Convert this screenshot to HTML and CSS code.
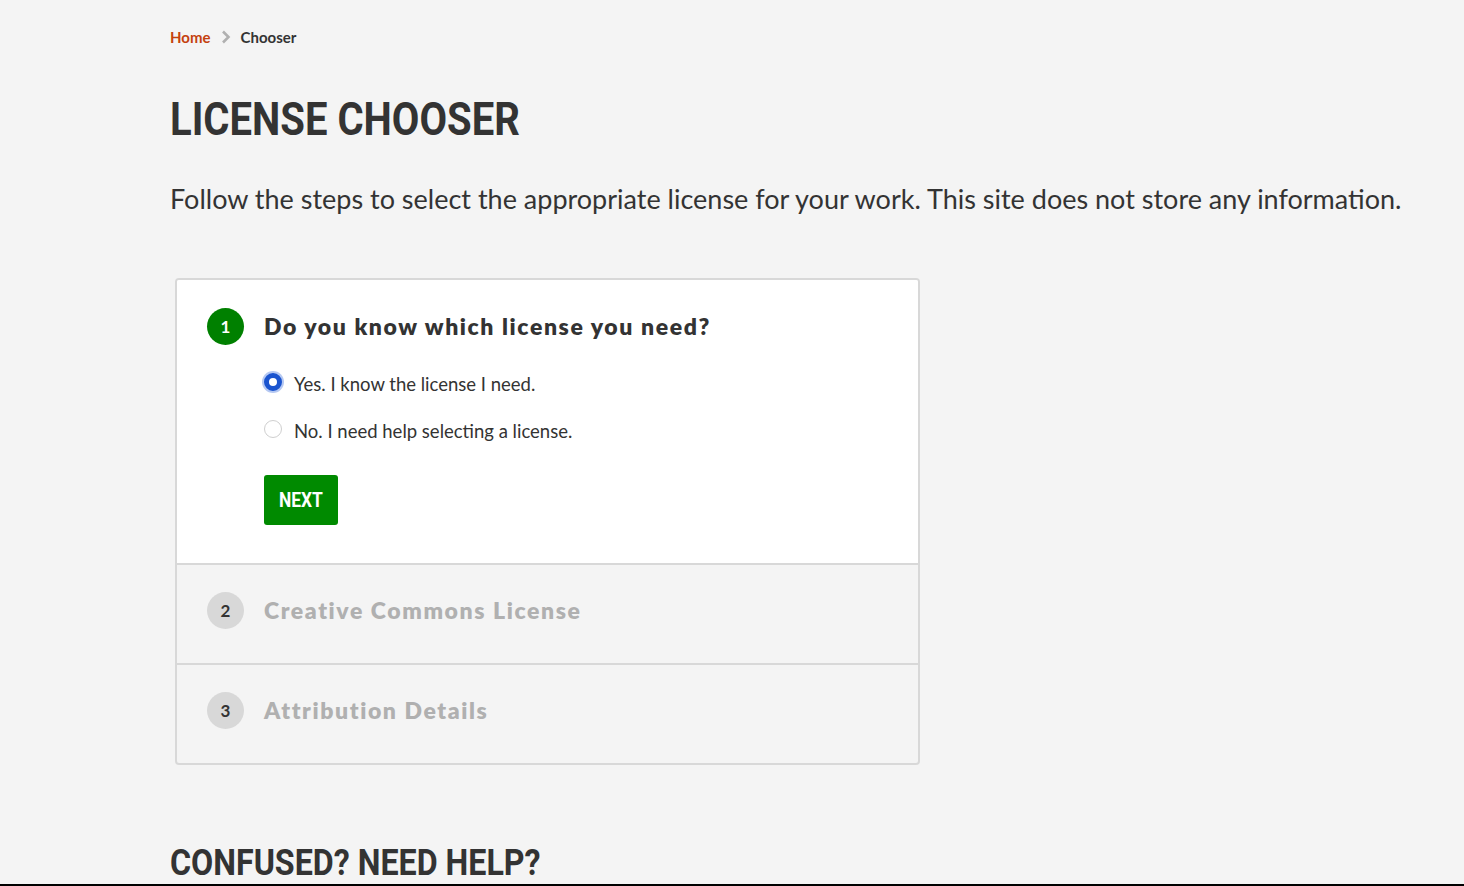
FILE: index.html
```html
<!DOCTYPE html>
<html lang="en">
<head>
<meta charset="utf-8">
<title>License Chooser</title>
<link rel="stylesheet" href="styles.css">
</head>
<body>
<main class="page">
  <nav class="crumbs">
    <a class="crumb-home" href="#">Home</a>
    <svg class="crumb-sep" width="10" height="14" viewBox="0 0 10 14"><path d="M2 1.5 L7.5 7 L2 12.5" fill="none" stroke="#b0b0b0" stroke-width="2.6"/></svg>
    <span class="crumb-current">Chooser</span>
  </nav>
  <h1 class="title"><span class="cond">LICENSE CHOOSER</span></h1>
  <p class="lead">Follow the steps to select the appropriate license for your work. This site does not store any information.</p>

  <section class="stepper">
    <div class="step step-active">
      <div class="step-head">
        <span class="step-num num-active">1</span>
        <h2 class="step-title">Do you know which license you need?</h2>
      </div>
      <div class="step-body">
        <label class="opt"><span class="radio radio-on"></span>Yes. I know the license I need.</label>
        <label class="opt"><span class="radio"></span>No. I need help selecting a license.</label>
        <button class="next"><span class="cond">NEXT</span></button>
      </div>
    </div>
    <div class="step">
      <div class="step-head">
        <span class="step-num">2</span>
        <h2 class="step-title muted">Creative Commons License</h2>
      </div>
    </div>
    <div class="step">
      <div class="step-head">
        <span class="step-num">3</span>
        <h2 class="step-title muted">Attribution Details</h2>
      </div>
    </div>
  </section>

  <h2 class="help"><span class="cond">CONFUSED? NEED HELP?</span></h2>
</main>
<div class="bottom-bar"></div>
</body>
</html>
```

FILE: styles.css
```css
html, body {
  margin: 0;
  padding: 0;
  background: #f4f4f4;
  color: #333333;
  font-family: Lato, "Liberation Sans", sans-serif;
}
.page {
  padding: 25px 0 0 170px;
}
.crumbs {
  display: flex;
  align-items: center;
  gap: 9px;
  font-size: 15px;
  font-weight: 700;
  height: 24px;
}
.crumb-home {
  color: #c4410e;
  text-decoration: none;
}
.crumb-current {
  color: #333333;
}
.crumb-sep {
  margin: 0 1px;
}
.cond {
  display: inline-block;
  transform: scaleX(0.87);
  transform-origin: left center;
}
.title {
  margin: 0;
  margin-top: 40px;
  font-family: Roboto, "Liberation Sans", sans-serif;
  font-weight: 700;
  font-size: 46px;
  line-height: 60px;
  color: #333333;
  white-space: nowrap;
}
.lead {
  margin: 32px 0 0 0;
  font-size: 27px;
  line-height: 36px;
  color: #333333;
  letter-spacing: 0;
}
.stepper {
  margin: 61px 0 0 5px;
  width: 741px;
  border: 2px solid #d8d8d8;
  border-radius: 4px;
  overflow: hidden;
}
.step {
  border-top: 2px solid #d8d8d8;
  padding: 26px 30px 32px;
  height: 40px;
}
.step:first-child {
  border-top: none;
}
.step-active {
  background: #ffffff;
  height: auto;
  padding: 27px 30px 38px;
}
.step-head {
  display: flex;
  align-items: center;
  gap: 20px;
  height: 38px;
}
.step-num {
  width: 37px;
  height: 37px;
  border-radius: 50%;
  background: #d8d8d8;
  color: #333333;
  font-weight: 700;
  font-size: 17px;
  display: flex;
  align-items: center;
  justify-content: center;
  flex: none;
}
.num-active {
  background: #008000;
  color: #ffffff;
}
.step-title {
  margin: 0;
  font-size: 23px;
  font-weight: 800;
  letter-spacing: 1.6px;
  color: #333333;
}
.muted {
  color: #b0b0b0;
}
.step-body {
  padding-left: 57px;
  padding-top: 22px;
  display: flex;
  flex-direction: column;
  align-items: flex-start;
}
.opt {
  display: flex;
  align-items: center;
  gap: 12px;
  font-size: 18.5px;
  line-height: 26px;
  height: 34px;
  color: #333333;
}
.opt:nth-child(2) {
  margin-top: 13px;
}
.radio {
  width: 18px;
  height: 18px;
  border: 1px solid #cfcfcf;
  border-radius: 50%;
  background: #ffffff;
  box-sizing: border-box;
  flex: none;
  margin-top: -4px;
}
.radio-on {
  border: 5px solid #1a54cf;
  box-shadow: 0 0 0 2px #b5c8f2;
}
.next {
  margin-top: 27px;
  width: 74px;
  height: 50px;
  border: none;
  border-radius: 3px;
  background: #008a00;
  color: #ffffff;
  font-family: Roboto, "Liberation Sans", sans-serif;
  font-weight: 700;
  font-size: 20px;
  padding: 0 0 0 15px;
  text-align: left;
}
.help {
  margin: 76px 0 0 0;
  font-family: Roboto, "Liberation Sans", sans-serif;
  font-weight: 700;
  font-size: 37px;
  line-height: 44px;
  color: #333333;
  white-space: nowrap;
}
.bottom-bar {
  position: fixed;
  left: 0;
  right: 0;
  bottom: 0;
  height: 2px;
  background: #000000;
}
```
